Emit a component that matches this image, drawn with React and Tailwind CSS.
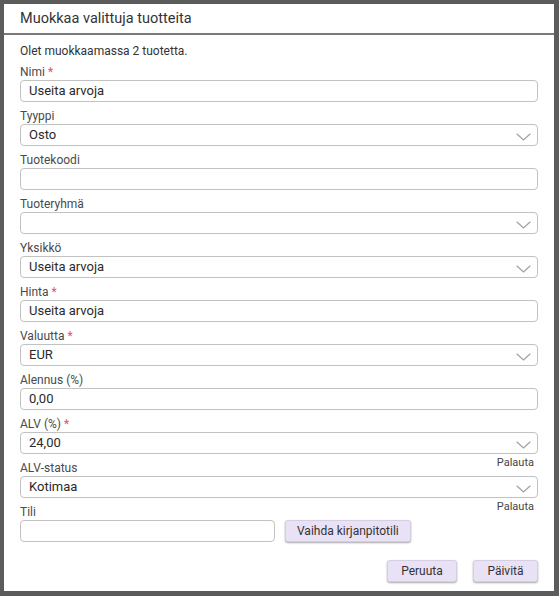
import React from "react";

const font = { fontFamily: 'Roboto, "Noto Sans", sans-serif' };

function Chevron() {
  return (
    <svg width="15" height="8" viewBox="0 0 15 8" className="absolute right-[6px] top-[8px]" fill="none">
      <path d="M0.7 0.7 L7.5 7 L14.3 0.7" stroke="#a0a0a0" strokeWidth="1.2" />
    </svg>
  );
}

function Field({ label, required, value, select, reset }) {
  return (
    <div className="mb-[2px]">
      <div className="pt-[4px] leading-[16px] h-[20px] text-[12px] text-[#4a4a4a]">
        {label}
        {required && <span className="text-[#e05555] ml-[3px]">*</span>}
      </div>
      <div className="relative h-[22px] border border-[#c2c2c2] rounded-[4px] bg-white pl-[8px] text-[13px] leading-[20px] text-[#2a2a2a]">
        {value}
        {select && <Chevron />}
        {reset && (
          <div className="absolute right-[3px] top-[23px] text-[11px] leading-[14px] text-[#444]">Palauta</div>
        )}
      </div>
    </div>
  );
}

function Btn({ children, className = "" }) {
  return (
    <button className={"h-[22px] px-[10px] rounded-[3px] bg-[#e9e1f5] border border-[#d6cfe2] shadow-[0_1px_2px_rgba(0,0,0,0.35)] text-[12px] leading-[20px] text-[#333] " + className}>
      {children}
    </button>
  );
}

export default function App() {
  return (
    <div className="w-[559px] h-[596px] bg-[#5c5c5c] pt-[4px] pl-[4px]" style={font}>
      <div className="w-[550px] h-[587px] bg-white flex flex-col">
        <div className="h-[31px] border-b-2 border-[#7a7a7a] pl-[16px] pt-[6px] text-[14.5px] leading-[18px] text-[#333]">
          Muokkaa valittuja tuotteita
        </div>
        <div className="px-[16px] pt-[7px]">
          <div className="h-[18px] leading-[18px] text-[12px] text-[#333]">Olet muokkaamassa 2 tuotetta.</div>
          <Field label="Nimi" required value="Useita arvoja" />
          <Field label="Tyyppi" value="Osto" select />
          <Field label="Tuotekoodi" value="" />
          <Field label="Tuoteryhmä" value="" select />
          <Field label="Yksikkö" value="Useita arvoja" select />
          <Field label="Hinta" required value="Useita arvoja" />
          <Field label="Valuutta" required value="EUR" select />
          <Field label="Alennus (%)" value="0,00" />
          <Field label="ALV (%)" required value="24,00" select reset />
          <Field label="ALV-status" value="Kotimaa" select reset />
          <div>
            <div className="pt-[4px] leading-[16px] h-[20px] text-[12px] text-[#4a4a4a]">Tili</div>
            <div className="flex items-center gap-[10px]">
              <div className="w-[255px] h-[22px] border border-[#c2c2c2] rounded-[4px] bg-white"></div>
              <Btn className="px-[11px]">Vaihda kirjanpitotili</Btn>
            </div>
          </div>
          <div className="flex justify-end gap-[16px] mt-[18px]">
            <Btn className="w-[70px]">Peruuta</Btn>
            <Btn className="w-[65px]">Päivitä</Btn>
          </div>
        </div>
      </div>
    </div>
  );
}
